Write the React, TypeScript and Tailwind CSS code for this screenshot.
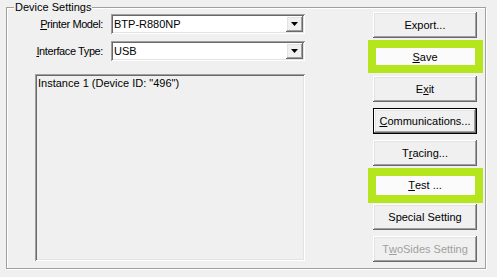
import React from 'react';

const raised =
  'shadow-[inset_-1px_-1px_#696969,inset_1px_1px_#ffffff,inset_-2px_-2px_#a0a0a0,inset_2px_2px_#e3e3e3]';
const sunken =
  'shadow-[inset_1px_1px_#a0a0a0,inset_-1px_-1px_#ffffff,inset_2px_2px_#696969,inset_-2px_-2px_#e3e3e3]';

function Combo({ value }: { value: string }) {
  return (
    <div className={`w-[194px] h-[20px] bg-white flex items-stretch p-[2px] ${sunken}`}>
      <div className="flex-1 pl-[1px] leading-[16px] text-black">{value}</div>
      <div className={`w-[17px] bg-[#f0f0f0] flex items-center justify-center ${raised}`}>
        <svg width="7" height="4" viewBox="0 0 7 4">
          <polygon points="0,0 7,0 3.5,4" fill="#000" />
        </svg>
      </div>
    </div>
  );
}

function Btn({
  children,
  highlight,
  isDefault,
  disabled,
}: {
  children: React.ReactNode;
  highlight?: 'save' | 'test';
  isDefault?: boolean;
  disabled?: boolean;
}) {
  return (
    <div className="relative w-[104px] h-[26px]">
      <div
        className={`w-full h-full flex items-center justify-center ${
          highlight ? 'bg-[#fbfbfb]' : 'bg-[#f0f0f0]'
        } ${isDefault ? 'border border-black' : ''} ${raised} ${
          disabled ? 'text-[#a0a0a0]' : 'text-black'
        }`}
      >
        {children}
      </div>
      {highlight === 'save' && (
        <div className="absolute -left-[5px] -right-[6px] -top-[4px] -bottom-[3px] border-[8px] border-[#b5e61d]" />
      )}
      {highlight === 'test' && (
        <div className="absolute -left-[5px] -right-[6px] -top-[4px] -bottom-[5px] border-[8px] border-[#b5e61d]" />
      )}
    </div>
  );
}

export default function App() {
  return (
    <div
      className="w-[497px] h-[277px] bg-[#f0f0f0] pt-[7px] pl-[6px] text-[11px] text-black"
      style={{ fontFamily: '"Liberation Sans", Arial, sans-serif' }}
    >
      {/* Device Settings group */}
      <div className="relative w-[480px] h-[262px] border border-[#a0a0a0] shadow-[inset_1px_1px_#ffffff,1px_1px_#ffffff] flex">
        <span className="absolute left-[7px] -top-[8px] px-[1px] bg-[#f0f0f0] leading-[14px]">
          Device Settings
        </span>

        {/* left column */}
        <div className="pl-[28px] pt-[6px] flex flex-col">
          <div className="flex items-center">
            <div className="w-[68px] text-right tracking-[-0.4px]">
              <u>P</u>rinter Model:
            </div>
            <div className="ml-[8px]">
              <Combo value="BTP-R880NP" />
            </div>
          </div>
          <div className="flex items-center mt-[7px]">
            <div className="w-[68px] text-right tracking-[-0.4px]">
              <u>I</u>nterface Type:
            </div>
            <div className="ml-[8px]">
              <Combo value="USB" />
            </div>
          </div>
          <div className={`mt-[13px] w-[270px] h-[187px] bg-[#f0f0f0] p-[2px] ${sunken}`}>
            <div className="pl-[1px] leading-[14px]">Instance 1 (Device ID: "496")</div>
          </div>
        </div>

        {/* right column */}
        <div className="ml-[68px] pt-[4px] flex flex-col gap-[6px]">
          <Btn>Export...</Btn>
          <Btn highlight="save">
            <u>S</u>ave
          </Btn>
          <Btn>
            E<u>x</u>it
          </Btn>
          <Btn isDefault>
            <u>C</u>ommunications...
          </Btn>
          <Btn>
            T<u>r</u>acing...
          </Btn>
          <Btn highlight="test">
            <u>T</u>est ...
          </Btn>
          <Btn>
            Special Settin<u>g</u>
          </Btn>
          <Btn disabled>
            T<u>w</u>oSides Setting
          </Btn>
        </div>
      </div>
    </div>
  );
}
